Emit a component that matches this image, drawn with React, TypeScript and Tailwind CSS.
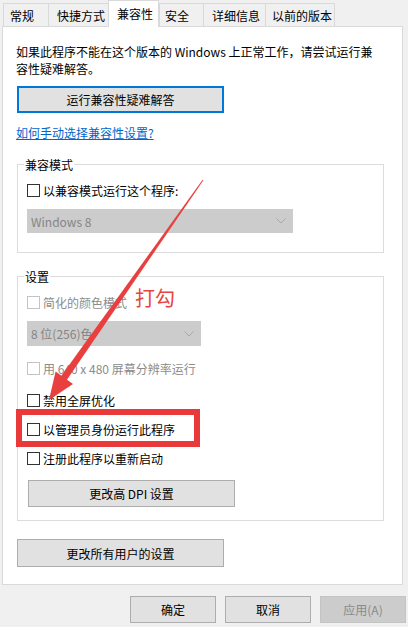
import React from "react";

function Checkbox({ label, disabled }: { label: string; disabled?: boolean }) {
  return (
    <div className="flex items-center h-[17px] leading-[17px]">
      <div
        className={
          "w-[13px] h-[13px] border bg-white shrink-0 " +
          (disabled ? "border-[#c4c4c4]" : "border-[#333333]")
        }
      />
      <span className={"ml-[3px] whitespace-nowrap " + (disabled ? "text-[#8c8c8c]" : "text-black")}>
        {label}
      </span>
    </div>
  );
}

function Chevron() {
  return (
    <svg width="10" height="6" viewBox="0 0 10 6" className="shrink-0">
      <path d="M0.5 0.5 L5 5 L9.5 0.5" fill="none" stroke="#a8a8a8" strokeWidth="1" />
    </svg>
  );
}

function Select({ text, w }: { text: string; w: string }) {
  return (
    <div className={"flex items-center justify-between bg-[#cccccc] border border-[#cccccc] pl-[3px] pr-[6px] text-[#858585] " + w}>
      <span className="whitespace-nowrap">{text}</span>
      <Chevron />
    </div>
  );
}

function Button({ text, cls }: { text: string; cls?: string }) {
  return (
    <div
      className={
        "flex items-center justify-center h-[27px] bg-[#e1e1e1] border border-[#adadad] text-black whitespace-nowrap " +
        (cls || "")
      }
    >
      {text}
    </div>
  );
}

export default function App() {
  const tabs = [
    { t: "常规", w: "w-[45px]", pl: "pl-[6px]" },
    { t: "快捷方式", w: "w-[60px]", pl: "pl-[8px]" },
    { t: "兼容性", w: "w-[51px]", pl: "pl-[8px]", active: true },
    { t: "安全", w: "w-[44px]", pl: "pl-[5px]" },
    { t: "详细信息", w: "w-[62px]", pl: "pl-[8px]" },
    { t: "以前的版本", w: "w-[70px]", pl: "pl-[6px]", last: true },
  ];
  return (
    <div className="relative w-[408px] h-[627px] overflow-hidden bg-[#f0f0f0] text-[12px] leading-[17px] text-black font-['Noto_Sans_CJK_SC','Noto_Sans',sans-serif]">
      {/* tab strip */}
      <div className="flex items-end h-[26px] pl-[3px]">
        {tabs.map((tb) =>
          tb.active ? (
            <div
              key={tb.t}
              className={"relative z-10 h-[27px] -mb-px bg-white border-t border-l border-r border-[#d9d9d9] pt-[4px] whitespace-nowrap " + tb.w + " " + tb.pl}
            >
              {tb.t}
            </div>
          ) : (
            <div
              key={tb.t}
              className={
                "h-[23px] flex items-center bg-[#f0f0f0] border-t border-l border-[#d9d9d9] whitespace-nowrap " +
                (tb.last ? "border-r " : "") +
                tb.w +
                " " +
                tb.pl
              }
            >
              {tb.t}
            </div>
          )
        )}
      </div>

      {/* panel */}
      <div className="ml-[2px] w-[401px] h-[559px] bg-white border border-[#d9d9d9] pl-[14px] pt-[16px]">
        <div className="-ml-px">
          <div className="whitespace-nowrap">如果此程序不能在这个版本的 Windows 上正常工作，请尝试运行兼</div>
          <div className="whitespace-nowrap">容性疑难解答。</div>
        </div>
        <div className="mt-[9px] w-[207px] h-[27px] flex items-center justify-center bg-[#e1e1e1] border-2 border-[#0078d7]">
          运行兼容性疑难解答
        </div>
        <div className="mt-[11px] -ml-px text-[#0066cc] underline whitespace-nowrap">如何手动选择兼容性设置?</div>

        {/* group 1 */}
        <div className="relative mt-[23px] w-[367px] border border-[#dcdcdc] pl-[9px] pt-[17px] pb-[19px]">
          <div className="absolute top-[-9px] left-[6px] bg-white px-[1px]">兼容模式</div>
          <Checkbox label="以兼容模式运行这个程序:" />
          <div className="mt-[10px]">
            <Select text="Windows 8" w="w-[266px] h-[24px]" />
          </div>
        </div>

        {/* group 2 */}
        <div className="relative mt-[23px] w-[367px] border border-[#dcdcdc] pl-[9px] pt-[17px] pb-[13px]">
          <div className="absolute top-[-9px] left-[6px] bg-white px-[1px]">设置</div>
          <Checkbox label="简化的颜色模式" disabled />
          <div className="mt-[10px]">
            <Select text="8 位(256)色" w="w-[174px] h-[25px]" />
          </div>
          <div className="mt-[14px]">
            <Checkbox label="用 640 x 480 屏幕分辨率运行" disabled />
          </div>
          <div className="mt-[15px]">
            <Checkbox label="禁用全屏优化" />
          </div>
          <div className="mt-[12px]">
            <Checkbox label="以管理员身份运行此程序" />
          </div>
          <div className="mt-[12px]">
            <Checkbox label="注册此程序以重新启动" />
          </div>
          <div className="mt-[13px] ml-[1px]">
            <Button text="更改高 DPI 设置" cls="w-[207px]" />
          </div>
        </div>

        <div className="mt-[18px]">
          <Button text="更改所有用户的设置" cls="w-[207px] h-[28px]" />
        </div>
      </div>

      {/* bottom buttons */}
      <div className="flex mt-[11px] pl-[130px] gap-[9px]">
        <Button text="确定" cls="w-[86px]" />
        <Button text="取消" cls="w-[86px]" />
        <div className="flex items-center justify-center h-[27px] w-[86px] bg-[#cccccc] border border-[#c4c4c4] text-[#8a8a8a] whitespace-nowrap">
          应用(A)
        </div>
      </div>

      {/* annotations */}
      <div className="absolute left-[16px] top-[409px] w-[184px] h-[38px] border-[6px] border-[#e83a3a] pointer-events-none" />
      <div className="absolute left-[135px] top-[286px] text-[20px] leading-[24px] text-[#e8433f] whitespace-nowrap">打勾</div>
      <svg className="absolute left-0 top-0 pointer-events-none" width="408" height="627" viewBox="0 0 408 627">
        <polygon
          points="203.4,180.3 202.6,179.7 61.0,376.3 66.6,380.3"
          fill="#e8403e"
        />
        <polygon points="49,400 55.6,371.6 73.0,384.0" fill="#e8403e" />
      </svg>
    </div>
  );
}
